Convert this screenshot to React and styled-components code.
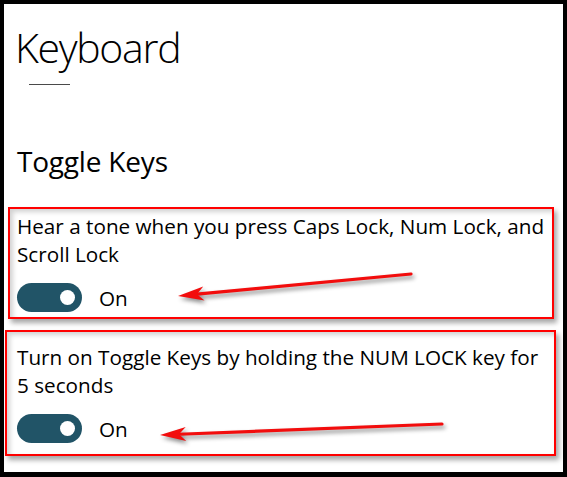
import React from 'react';
import styled, { createGlobalStyle } from 'styled-components';

const GlobalStyle = createGlobalStyle`
    html, body {
        margin: 0;
        padding: 0;
        background: #fff;
    }
`;

const settings = [
    {
        id: 'tone',
        text: 'Hear a tone when you press Caps Lock, Num Lock, and Scroll Lock',
        on: true,
        arrow: { tip: [168, 87], tail: [401, 65] },
    },
    {
        id: 'numlock',
        text: 'Turn on Toggle Keys by holding the NUM LOCK key for 5 seconds',
        on: true,
        arrow: { tip: [153, 103], tail: [435, 92] },
    },
];

function Arrow({ tip, tail }) {
    const [tx, ty] = tip;
    const [ex, ey] = tail;
    const len = Math.hypot(ex - tx, ey - ty);
    const ux = (ex - tx) / len;
    const uy = (ey - ty) / len;
    const px = -uy;
    const py = ux;
    const headLen = 26;
    const half = 7;
    const bx = tx + ux * headLen;
    const by = ty + uy * headLen;
    const nx = tx + ux * 19;
    const ny = ty + uy * 19;
    const head = `M${tx} ${ty} L${bx + px * half} ${by + py * half} L${nx} ${ny} L${bx - px * half} ${by - py * half} Z`;

    return (
        <ArrowSvg width="100%" height="100%">
            <line x1={nx} y1={ny} x2={ex} y2={ey} stroke="#f20d0d" strokeWidth="3.2" strokeLinecap="round" />
            <path d={head} fill="#f20d0d" />
        </ArrowSvg>
    );
}

function Toggle({ on }) {
    return (
        <ToggleRow>
            <Switch $on={on}>
                <Knob $on={on} />
            </Switch>
            <ToggleLabel>{on ? 'On' : 'Off'}</ToggleLabel>
        </ToggleRow>
    );
}

export default function App() {
    return (
        <>
            <GlobalStyle />
            <Frame>
                <Title>Keyboard</Title>
                <Underline />
                <Section>Toggle Keys</Section>
                {settings.map((item, i) => (
                    <Callout key={item.id} $variant={i}>
                        <Description>{item.text}</Description>
                        <Toggle on={item.on} />
                        <Arrow tip={item.arrow.tip} tail={item.arrow.tail} />
                    </Callout>
                ))}
            </Frame>
        </>
    );
}

const Frame = styled.div`
    width: 567px;
    height: 477px;
    box-sizing: border-box;
    border: 4px solid #000;
    border-bottom-width: 5px;
    background: #fff;
    overflow: hidden;
    font-family: 'Open Sans', 'Noto Sans', sans-serif;
    color: #000;
    display: flex;
    flex-direction: column;
`;

const Title = styled.h1`
    margin: 17px 0 0 11px;
    font-size: 41px;
    font-weight: 300;
    line-height: 52px;
    letter-spacing: -1.3px;
`;

const Underline = styled.div`
    margin: 11px 0 0 25px;
    width: 41px;
    height: 1px;
    background: #4a4a4a;
`;

const Section = styled.h2`
    margin: 58px 0 0 13px;
    font-size: 28px;
    font-weight: 400;
    line-height: 36px;
    letter-spacing: -0.2px;
`;

const Callout = styled.div`
    position: relative;
    box-sizing: border-box;
    flex-shrink: 0;
    margin-left: ${(p) => (p.$variant === 0 ? '4px' : '1px')};
    margin-top: ${(p) => (p.$variant === 0 ? '28px' : '11px')};
    width: ${(p) => (p.$variant === 0 ? '546px' : '551px')};
    height: ${(p) => (p.$variant === 0 ? '112px' : '126px')};
    padding: ${(p) => (p.$variant === 0 ? '3px 0 0 7px' : '11px 0 0 10px')};
    border: 2px solid #f00;
    box-shadow:
        3px 4px 5px rgba(0, 0, 0, 0.35),
        inset 3px 3px 5px rgba(0, 0, 0, 0.18);
`;

const Description = styled.p`
    margin: 0;
    max-width: 536px;
    font-size: 20.7px;
    line-height: 28px;
`;

const ToggleRow = styled.div`
    display: flex;
    align-items: center;
    gap: 17px;
    margin-top: 15px;
`;

const Switch = styled.div`
    position: relative;
    width: 65px;
    height: 29px;
    border-radius: 15px;
    background: ${(p) => (p.$on ? '#215467' : '#fff')};
    display: flex;
    align-items: center;
    justify-content: ${(p) => (p.$on ? 'flex-end' : 'flex-start')};
    padding: 0 7px;
    box-sizing: border-box;
`;

const Knob = styled.span`
    width: 15px;
    height: 15px;
    border-radius: 50%;
    background: ${(p) => (p.$on ? '#fff' : '#000')};
`;

const ToggleLabel = styled.span`
    font-size: 20.7px;
    line-height: 28px;
`;

const ArrowSvg = styled.svg`
    position: absolute;
    left: 0;
    top: 0;
    overflow: visible;
    pointer-events: none;
    filter: drop-shadow(2px 3px 2px rgba(0, 0, 0, 0.45));
`;
